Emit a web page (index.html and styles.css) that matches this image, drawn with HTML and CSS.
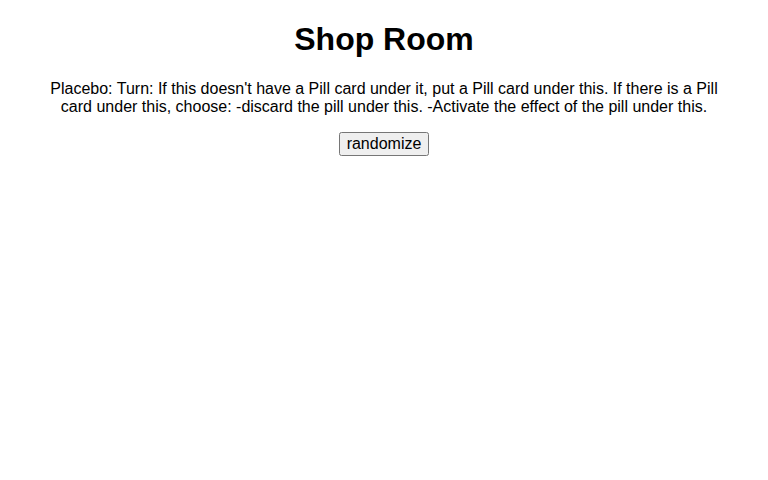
FILE: index.html
```html
<!DOCTYPE html>
<html>
<head>
<meta charset="utf-8">
<title>Shop Room</title>
<link rel="stylesheet" href="styles.css">
</head>
<body class="page">
<main class="room">
<h1 class="title">Shop Room</h1>
<p class="card-text">Placebo: Turn: If this doesn't have a Pill card under it, put a Pill card under this. If there is a Pill card under this, choose: -discard the pill under this. -Activate the effect of the pill under this.</p>
<button class="randomize">randomize</button>
</main>
</body>
</html>
```

FILE: styles.css
```css
.page {
  margin: 0;
  font-family: "Liberation Sans", Arial, sans-serif;
  color: #000;
  background: #fff;
}
.room {
  max-width: 690px;
  margin: 0 auto;
  text-align: center;
}
.title {
  font-size: 32px;
  font-weight: bold;
  margin: 21.44px 0;
}
.card-text {
  font-size: 16px;
  margin: 16px 0;
}
.randomize {
  font-family: "Liberation Sans", Arial, sans-serif;
  font-size: 16px;
}
```
